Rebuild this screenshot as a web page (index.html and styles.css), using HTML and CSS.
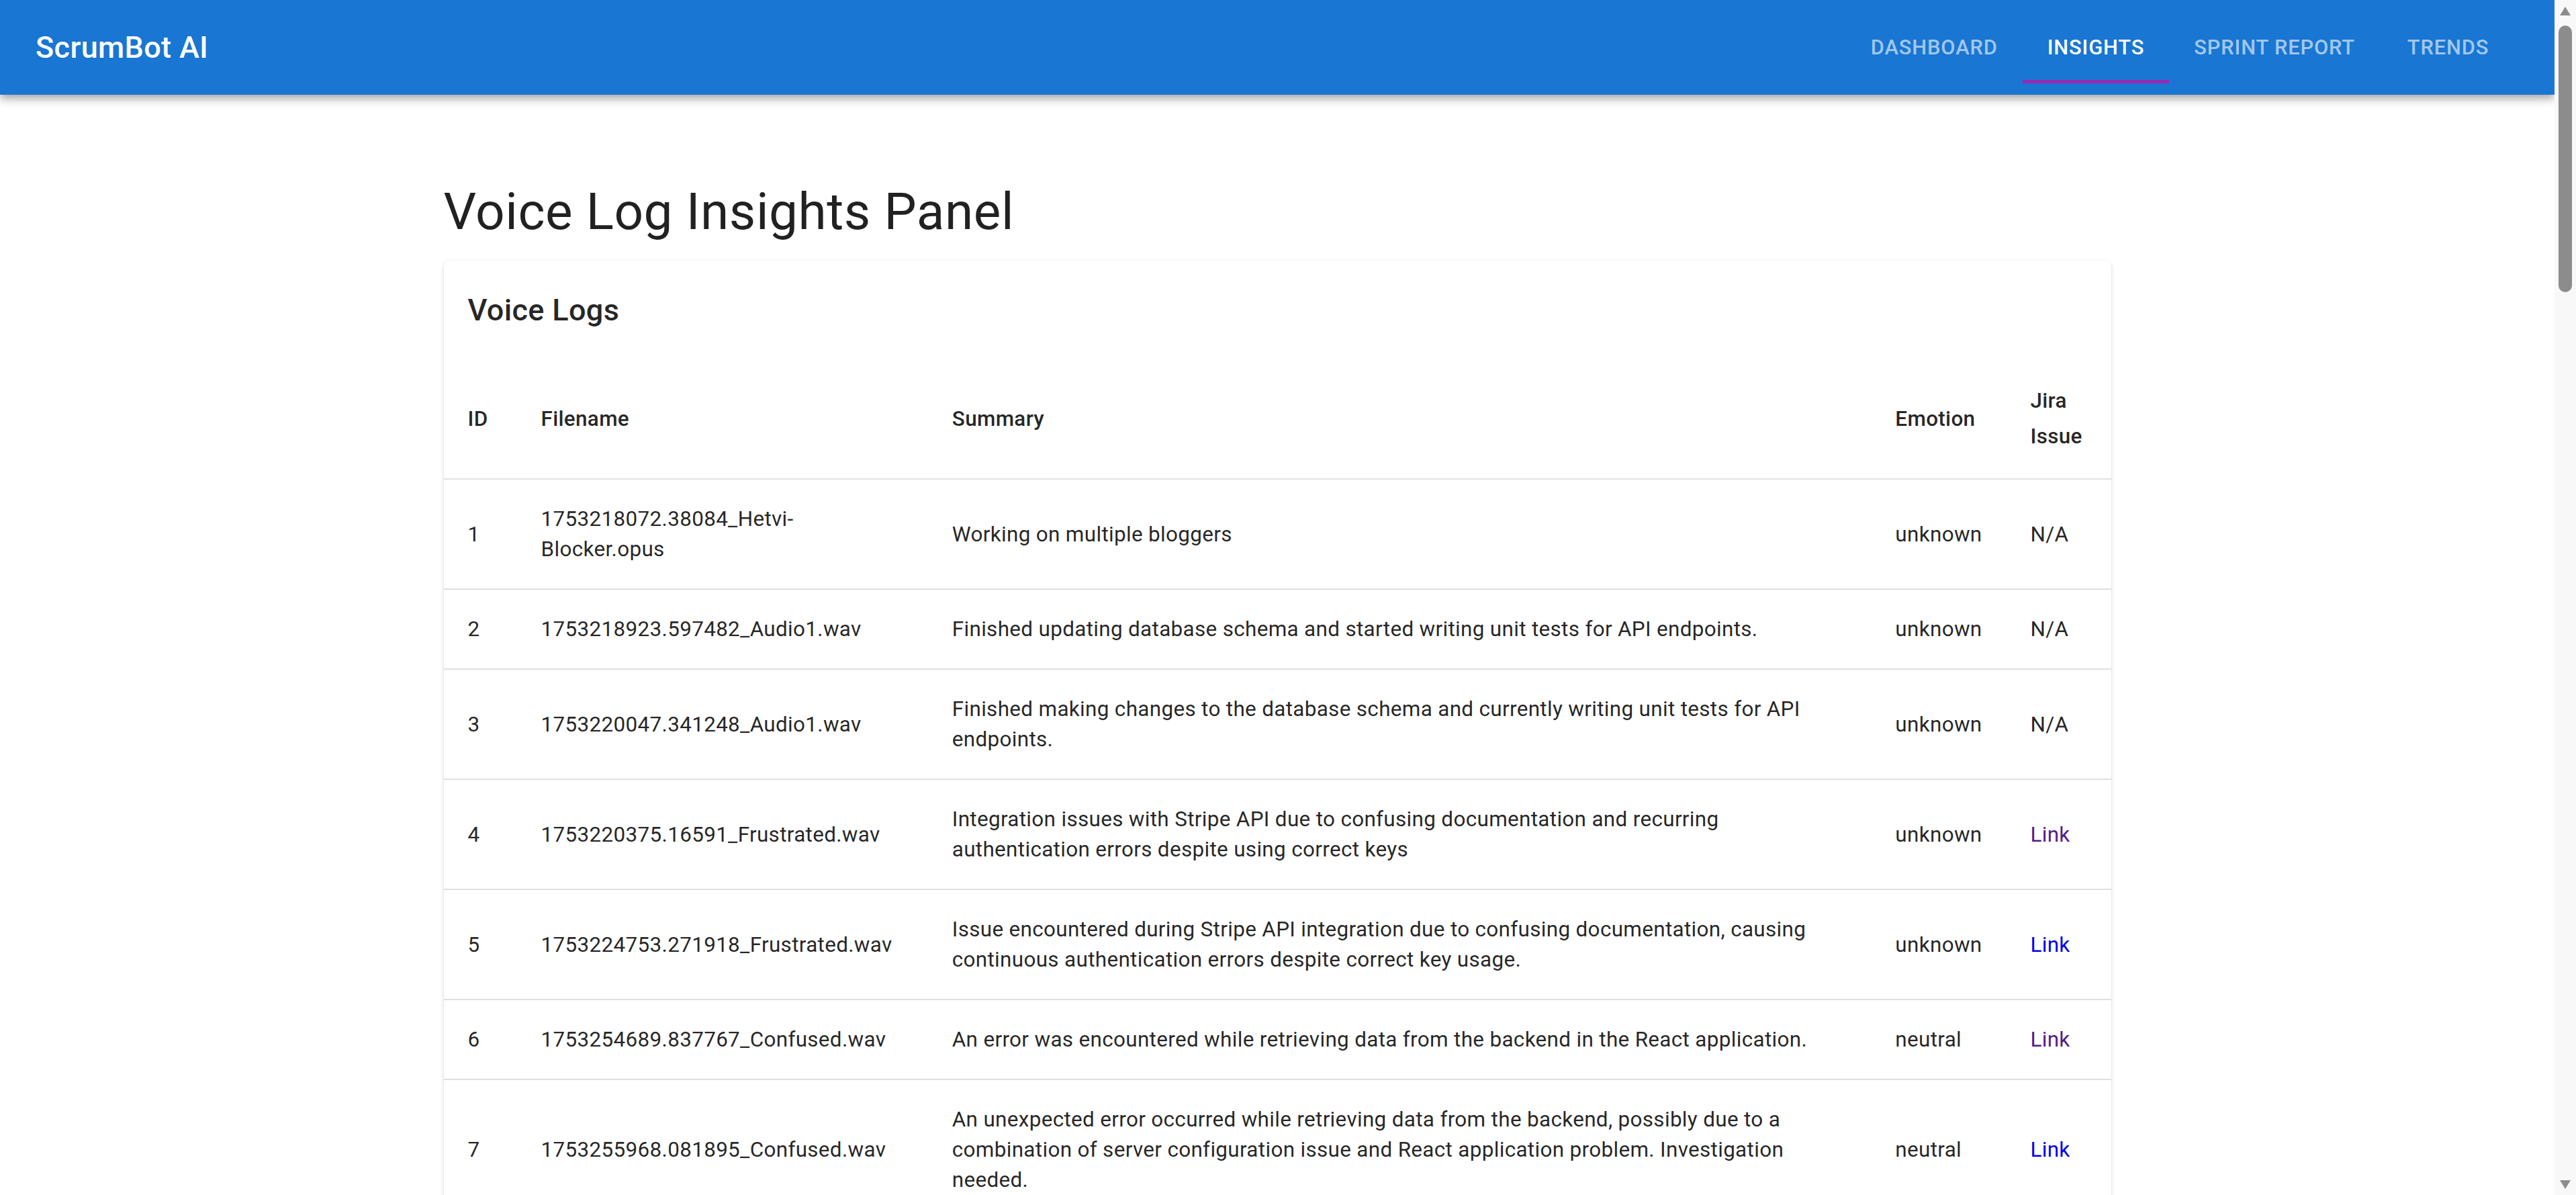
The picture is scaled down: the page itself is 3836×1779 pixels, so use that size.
FILE: index.html
```html
<!DOCTYPE html>
<html lang="en">
<head>
<meta charset="utf-8">
<title>ScrumBot AI – Insights</title>
<link rel="stylesheet" href="styles.css">
</head>
<body>
<header class="appbar">
  <div class="brand">ScrumBot AI</div>
  <nav class="tabs">
    <a class="tab">Dashboard</a>
    <a class="tab tab-active">Insights</a>
    <a class="tab">Sprint Report</a>
    <a class="tab">Trends</a>
  </nav>
</header>
<main class="container">
  <h1 class="page-title">Voice Log Insights Panel</h1>
  <section class="card">
    <h2 class="card-title">Voice Logs</h2>
    <table class="logs">
      <colgroup>
        <col class="c-id"><col class="c-file"><col class="c-sum"><col class="c-emo"><col class="c-jira">
      </colgroup>
      <thead>
        <tr><th>ID</th><th>Filename</th><th>Summary</th><th>Emotion</th><th>Jira Issue</th></tr>
      </thead>
      <tbody>
        <tr><td>1</td><td>1753218072.38084_Hetvi-Blocker.opus</td><td>Working on multiple bloggers</td><td>unknown</td><td>N/A</td></tr>
        <tr><td>2</td><td>1753218923.597482_Audio1.wav</td><td>Finished updating database schema and started writing unit tests for API endpoints.</td><td>unknown</td><td>N/A</td></tr>
        <tr><td>3</td><td>1753220047.341248_Audio1.wav</td><td>Finished making changes to the database schema and currently writing unit tests for API endpoints.</td><td>unknown</td><td>N/A</td></tr>
        <tr><td>4</td><td>1753220375.16591_Frustrated.wav</td><td>Integration issues with Stripe API due to confusing documentation and recurring authentication errors despite using correct keys</td><td>unknown</td><td><a class="link visited">Link</a></td></tr>
        <tr><td>5</td><td>1753224753.271918_Frustrated.wav</td><td>Issue encountered during Stripe API integration due to confusing documentation, causing continuous authentication errors despite correct key usage.</td><td>unknown</td><td><a class="link">Link</a></td></tr>
        <tr><td>6</td><td>1753254689.837767_Confused.wav</td><td>An error was encountered while retrieving data from the backend in the React application.</td><td>neutral</td><td><a class="link visited">Link</a></td></tr>
        <tr><td>7</td><td>1753255968.081895_Confused.wav</td><td>An unexpected error occurred while retrieving data from the backend, possibly due to a combination of server configuration issue and React application problem. Investigation needed.</td><td>neutral</td><td><a class="link">Link</a></td></tr>
      </tbody>
    </table>
  </section>
</main>
<div class="scrollbar" aria-hidden="true">
  <span class="sb-arrow sb-up"></span>
  <span class="sb-thumb"></span>
  <span class="sb-fill"></span>
  <span class="sb-arrow sb-down"></span>
</div>
</body>
</html>
```
FILE: styles.css
```css
html {
  background: #fff;
}
body {
  margin: 0;
  padding-right: 32px;
  font-family: Roboto, "Liberation Sans", Arial, sans-serif;
  color: rgba(0, 0, 0, 0.87);
  background: #fff;
}

/* Browser scrollbar as seen in the capture */
.scrollbar {
  position: fixed;
  top: 0;
  right: 0;
  width: 32px;
  height: 100vh;
  background: #f8f8f8;
  display: flex;
  flex-direction: column;
  align-items: center;
  z-index: 10;
}
.sb-arrow {
  width: 0;
  height: 0;
  border-left: 8px solid transparent;
  border-right: 8px solid transparent;
}
.sb-up {
  margin-top: 10px;
  border-bottom: 13px solid #8c8c8c;
}
.sb-down {
  margin-bottom: 9px;
  border-top: 13px solid #8c8c8c;
}
.sb-thumb {
  margin-top: 15px;
  width: 20px;
  height: 397px;
  border-radius: 10px;
  background: #8c8c8c;
}
.sb-fill {
  flex: 1;
}

/* App bar */
.appbar {
  height: 141px;
  box-sizing: border-box;
  padding: 0 57px 0 53px;
  display: flex;
  align-items: center;
  justify-content: space-between;
  background: #1976d2;
  color: #fff;
  box-shadow: 0 4px 9px -2px rgba(0, 0, 0, 0.2), 0 9px 11px 0 rgba(0, 0, 0, 0.14), 0 2px 22px 0 rgba(0, 0, 0, 0.12);
  position: relative;
  z-index: 2;
}
.brand {
  font-size: 45px;
  font-weight: 500;
  letter-spacing: 0.33px;
  line-height: 1.6;
}
.tabs {
  display: flex;
  height: 106px;
}
.tab {
  box-sizing: border-box;
  min-width: 203px;
  padding: 0 37px;
  display: flex;
  align-items: center;
  justify-content: center;
  font-size: 30.8px;
  font-weight: 500;
  letter-spacing: 0.88px;
  text-transform: uppercase;
  color: rgba(255, 255, 255, 0.6);
  position: relative;
  white-space: nowrap;
}
.tab-active {
  color: #fff;
}
.tab-active::after {
  content: "";
  position: absolute;
  left: 0;
  right: 0;
  bottom: 0;
  height: 5px;
  background: #9c27b0;
}

/* Content */
.container {
  width: 2483px;
  margin: 0 auto;
  padding-top: 125px;
}
.page-title {
  margin: 0 0 24px;
  font-size: 76.5px;
  font-weight: 400;
  line-height: 98px;
  letter-spacing: 0.56px;
  color: rgba(0, 0, 0, 0.87);
}
.card {
  background: #fff;
  border-radius: 9px;
  box-shadow: 0 4px 2px -2px rgba(0, 0, 0, 0.2), 0 2px 2px 0 rgba(0, 0, 0, 0.14), 0 2px 7px 0 rgba(0, 0, 0, 0.12);
  overflow: hidden;
}
.card-title {
  margin: 0;
  padding: 38px 36px 36px;
  font-size: 45px;
  font-weight: 500;
  line-height: 72px;
  letter-spacing: 0.33px;
}

.logs {
  width: 100%;
  table-layout: fixed;
  border-collapse: collapse;
  font-size: 31.45px;
}
.c-id { width: 109px; }
.c-file { width: 612px; }
.c-sum { width: 1404px; }
.c-emo { width: 201px; }
.c-jira { width: 156px; }

.logs th,
.logs td {
  padding: 36px;
  text-align: left;
  vertical-align: middle;
  border-bottom: 2px solid #e0e0e0;
  letter-spacing: 0.33px;
}
.logs th {
  font-weight: 500;
  line-height: 53px;
}
.logs td {
  font-weight: 400;
  line-height: 45px;
}
.link {
  color: #0000ee;
  text-decoration: none;
  cursor: pointer;
}
.link.visited {
  color: #551a8b;
}
```
